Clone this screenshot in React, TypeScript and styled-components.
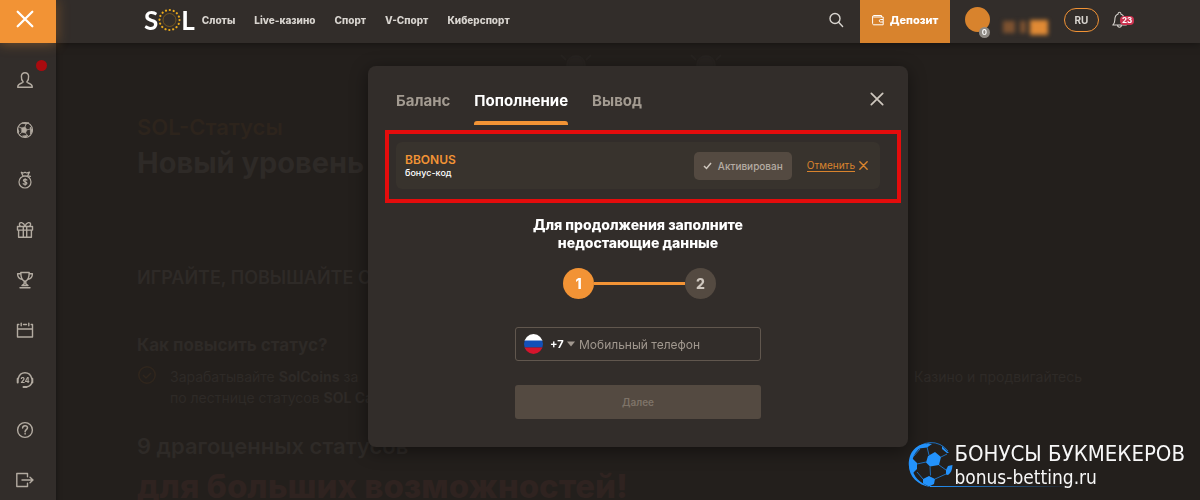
import React from 'react';
import styled, { createGlobalStyle } from 'styled-components';

const c = {
  page: '#231f1c',
  panel: '#322d2a',
  row: '#38332d',
  taupe: '#544a41',
  orange: '#f29335',
  muted: '#b3aba1',
  white: '#ffffff',
};

const GlobalStyle = createGlobalStyle`
  * { box-sizing: border-box; }
  body { margin: 0; background: ${c.page}; color: ${c.white}; overflow: hidden; }
  body, button, input, select { font-family: Inter, "Open Sans", sans-serif; }
  button { border: 0; padding: 0; background: none; color: inherit; cursor: pointer; }
  h1, h2, h3, p { margin: 0; }
`;

const Shell = styled.div`
  display: grid;
  grid-template-columns: 56px 1fr;
  height: 100vh;
  overflow: hidden;
`;

const Sidebar = styled.aside`
  position: relative;
  z-index: 3;
  display: flex;
  flex-direction: column;
  background: ${c.panel};
  box-shadow: 0 0 6px rgba(0, 0, 0, 0.4);
`;

const MenuToggle = styled.button`
  display: flex;
  flex: none;
  align-items: center;
  justify-content: center;
  height: 43px;
  padding: 0 6px 6px 0;
  background: ${c.orange};
  box-shadow: 0 0 12px rgba(242, 147, 53, 0.4);
`;

const SideNav = styled.nav`
  display: flex;
  flex-direction: column;
  padding-top: 12px;
`;

const SideLink = styled.a`
  position: relative;
  display: flex;
  flex: none;
  align-items: center;
  justify-content: center;
  height: 50px;
  padding-right: 6px;
  color: ${c.muted};
`;

const AlertDot = styled.span`
  position: absolute;
  top: 5px;
  right: 9px;
  width: 11px;
  height: 11px;
  border-radius: 50%;
  background: #a90b0f;
`;

const Column = styled.div`
  display: flex;
  flex-direction: column;
  min-width: 0;
`;

const Header = styled.header`
  position: relative;
  z-index: 2;
  display: flex;
  flex: none;
  align-items: center;
  height: 43px;
  padding: 0 66px 0 88px;
  background: ${c.panel};
  box-shadow: 0 0 8px rgba(0, 0, 0, 0.5);
`;

const Logo = styled.a`
  display: flex;
  align-items: center;
  margin-right: 7px;
  padding-bottom: 4px;
  color: ${c.white};
  font: 700 26px/36px Lato, sans-serif;
  text-decoration: none;
`;

const TopNav = styled.nav`
  display: flex;
  flex: 1;
  gap: 19px;
`;

const TopLink = styled.a`
  color: #d8d4cf;
  font-size: 10px;
  font-weight: 800;
  line-height: 16px;
  padding-bottom: 4px;
  text-decoration: none;
  white-space: nowrap;
`;

const SearchButton = styled.button`
  display: flex;
  margin: 0 16px 4px 0;
  color: #d8d4cf;
`;

const DepositButton = styled.button`
  display: flex;
  align-items: center;
  justify-content: center;
  gap: 6px;
  width: 90px;
  height: 43px;
  padding-bottom: 4px;
  background: #d8832d;
  color: ${c.white};
  font-size: 11px;
  font-weight: 800;
`;

const Avatar = styled.div`
  position: relative;
  width: 25px;
  height: 25px;
  margin: 0 10px 4px 15px;
  border-radius: 50%;
  background: #d8832d;
`;

const AvatarCount = styled.span`
  position: absolute;
  right: 0;
  bottom: -6px;
  width: 11px;
  height: 11px;
  border-radius: 50%;
  background: #8f8a84;
  font-size: 8px;
  font-weight: 600;
  line-height: 11px;
  text-align: center;
`;

const HiddenBalance = styled.div`
  display: flex;
  align-items: center;
  justify-content: space-between;
  width: 49px;
  height: 16px;
  margin: 11px 15px 0 0;
  padding: 0 1px 0 3px;
  filter: blur(2px);
`;

const BlurBar = styled.span<{ $w: number; $h: number; $color: string }>`
  width: ${(p) => p.$w}px;
  height: ${(p) => p.$h}px;
  background: ${(p) => p.$color};
`;

const LanguageButton = styled.button`
  width: 35px;
  height: 24px;
  margin: 0 13px 4px 0;
  border: 1px solid ${c.orange};
  border-radius: 12px;
  color: #d8d4cf;
  font-size: 10px;
  font-weight: 700;
`;

const BellButton = styled.button`
  position: relative;
  display: flex;
  width: 22px;
  margin-bottom: 4px;
  color: #d8d4cf;
`;

const BellCount = styled.span`
  position: absolute;
  top: 5px;
  right: 0;
  width: 14px;
  border-radius: 4px;
  background: #cc3350;
  color: ${c.white};
  font-size: 8px;
  font-weight: 700;
  line-height: 9px;
  text-align: center;
`;

const Page = styled.main`
  position: relative;
  padding: 70px 118px 0 81px;
  color: #2e2a27;
`;

const Awards = styled.div`
  position: absolute;
  top: 6px;
  left: 500px;
  display: flex;
  gap: 90px;
`;

const Eyebrow = styled.p`
  color: #2d241c;
  font-size: 22px;
  font-weight: 600;
  line-height: 28px;
`;

const PageTitle = styled.h1`
  font-size: 29px;
  font-weight: 700;
  line-height: 44px;
  white-space: nowrap;
`;

const Slogan = styled.h2`
  margin-top: 81px;
  font-size: 18px;
  font-weight: 600;
  line-height: 24px;
`;

const Question = styled.h3`
  margin-top: 43px;
  font-size: 17px;
  font-weight: 700;
  line-height: 24px;
`;

const Tip = styled.div`
  display: flex;
  gap: 11px;
  margin-top: 9px;
  font-size: 14px;
  line-height: 21px;
`;

const TipText = styled.div`
  flex: 1;
`;

const TipLine = styled.p`
  display: flex;
  justify-content: space-between;
`;

const StatusTitle = styled.h2`
  margin-top: 24px;
  font-size: 22px;
  font-weight: 600;
  line-height: 28px;
`;

const StatusLead = styled.p`
  margin-top: 6px;
  color: #2f2320;
  font-size: 33px;
  font-weight: 800;
  line-height: 40px;
  white-space: nowrap;
`;

const Overlay = styled.div`
  position: fixed;
  inset: 43px 0 0 56px;
  display: flex;
  align-items: flex-start;
  justify-content: center;
  padding: 23px 0 0 20px;
`;

const Dialog = styled.section`
  width: 540px;
  padding: 24px 28px 28px;
  border-radius: 8px;
  background: ${c.panel};
  box-shadow: 0 4px 18px rgba(0, 0, 0, 0.45);
`;

const DialogTop = styled.div`
  display: flex;
  align-items: flex-start;
  justify-content: space-between;
`;

const Tabs = styled.div`
  display: flex;
  gap: 24px;
`;

const Tab = styled.button<{ $active?: boolean }>`
  position: relative;
  padding-bottom: 13px;
  color: ${(p) => (p.$active ? c.white : '#a39b91')};
  font-size: 15px;
  font-weight: 700;
  line-height: 22px;
  &::after {
    content: '';
    position: absolute;
    inset: auto 0 0;
    height: 4px;
    border-radius: 3px 3px 0 0;
    background: ${(p) => (p.$active ? c.orange : 'transparent')};
  }
`;

const CloseButton = styled.button`
  display: flex;
  padding: 2px 0;
  margin-right: -4px;
  color: #cec7be;
`;

const Bonus = styled.div`
  position: relative;
  display: flex;
  align-items: center;
  height: 47px;
  margin-top: 17px;
  padding: 0 12px 0 9px;
  border-radius: 6px;
  background: ${c.row};
`;

const Highlight = styled.span`
  position: absolute;
  inset: -12px -21px -14px -11px;
  border: 4px solid #e40c0c;
  pointer-events: none;
`;

const BonusName = styled.div`
  flex: 1;
  font-size: 9px;
  font-weight: 500;
  line-height: 12px;
`;

const BonusCode = styled.strong`
  display: block;
  color: ${c.orange};
  font-size: 12px;
  font-weight: 600;
  line-height: 15px;
`;

const Activated = styled.button`
  display: flex;
  align-items: center;
  justify-content: center;
  gap: 6px;
  width: 98px;
  height: 28px;
  margin-right: 15px;
  border-radius: 5px;
  background: ${c.taupe};
  color: #b5aca3;
  font-size: 10px;
  font-weight: 500;
`;

const CancelButton = styled.button`
  display: flex;
  align-items: center;
  gap: 4px;
  color: #d8832d;
  font-size: 10px;
  span {
    border-bottom: 1px solid;
    line-height: 12px;
  }
`;

const FormTitle = styled.h2`
  margin-top: 27px;
  font-size: 14px;
  font-weight: 800;
  line-height: 18px;
  text-align: center;
`;

const Steps = styled.div`
  display: flex;
  align-items: center;
  justify-content: center;
  margin: 16px 0 28px;
  padding-left: 3px;
`;

const Step = styled.span<{ $active?: boolean }>`
  width: 31px;
  height: 31px;
  border-radius: 50%;
  background: ${(p) => (p.$active ? c.orange : c.taupe)};
  color: ${(p) => (p.$active ? c.white : '#cfc7be')};
  font-size: 14px;
  font-weight: 800;
  line-height: 31px;
  text-align: center;
`;

const StepLine = styled.span`
  width: 91px;
  height: 3px;
  background: ${c.orange};
`;

const Form = styled.form`
  display: flex;
  flex-direction: column;
  gap: 24px;
  width: 246px;
  margin: 0 auto;
`;

const PhoneField = styled.div`
  display: flex;
  align-items: center;
  height: 34px;
  padding: 0 8px;
  border: 1px solid #61574e;
  border-radius: 3px;
`;

const Prefix = styled.select`
  appearance: none;
  width: 15px;
  margin-left: 7px;
  padding: 0;
  border: 0;
  background: transparent;
  color: ${c.white};
  font-size: 11px;
  font-weight: 700;
`;

const PhoneInput = styled.input`
  flex: 1;
  min-width: 0;
  margin-left: 3px;
  padding: 0;
  border: 0;
  outline: 0;
  background: transparent;
  color: ${c.white};
  font-size: 12px;
  &::placeholder { color: #a1988f; opacity: 1; }
`;

const NextButton = styled.button`
  height: 34px;
  border-radius: 3px;
  background: ${c.taupe};
  color: #7e7368;
  font-size: 10px;
  font-weight: 600;
`;

const Watermark = styled.footer`
  position: fixed;
  right: 15px;
  bottom: 12px;
  z-index: 4;
  display: flex;
  align-items: center;
  gap: 1px;
  color: #f7f7f7;
  font-family: "DejaVu Sans Condensed", "DejaVu Sans", sans-serif;
  font-stretch: condensed;
  white-space: nowrap;
`;

const BrandName = styled.div`
  font-size: 22px;
  line-height: 24px;
`;

const BrandSite = styled.div`
  font-size: 19px;
  line-height: 22px;
`;

const Cross = ({ size, stroke = 1.5 }: { size: number; stroke?: number }) => (
  <svg width={size} height={size} viewBox="0 0 16 16" fill="none" stroke="currentColor" strokeWidth={stroke} strokeLinecap="round">
    <path d="M1.5 1.5l13 13M14.5 1.5l-13 13" />
  </svg>
);

const Icon = ({ children }: { children: React.ReactNode }) => (
  <svg width="18" height="18" viewBox="0 0 18 18" fill="none" stroke="currentColor" strokeWidth="1.4" strokeLinejoin="round" strokeLinecap="round">
    {children}
  </svg>
);

const sideItems = [
  {
    label: 'Профиль',
    alert: true,
    icon: <path d="M7.2 11C5.4 9 5.200 7 5.400 5 5.700 2.600 7 1.700 9 1.700s3.300.9 3.600 3.300c.2 2 0 4-1.800 6 0 1.200 5.500 1 5.500 5.200H1.700c0-4.200 5.500-4 5.500-5.200z" />,
  },
  {
    label: 'Спорт',
    icon: (
      <>
        <circle cx="9" cy="9" r="7.500" strokeWidth="1.100" />
        <path d="M5.500 7l3.500-1 2 2.800L9.500 12l-3.500-.8z" fill="currentColor" strokeWidth="0.600" />
        <path d="M9 6l1-3M11 8.800l3.500-.8M9.500 12l2 2.500M6 11.200L4 13M5.500 7L3 6" strokeWidth="0.800" />
        <path d="M6.500 2.200L10.500 3l2-1zM14.500 6.500l1.800 3.500-1.600 2.500zM1.800 8l1.200 3-1 .8zM7 15l4.500-.5-1.500 1.900z" fill="currentColor" strokeWidth="0.800" />
      </>
    ),
  },
  {
    label: 'Бонусы',
    icon: (
      <>
        <circle cx="9" cy="11" r="6" strokeWidth="1.200" />
        <path d="M7 5L5.300 1.200 7.500 2 9 1.200l1.500.8 3-.8L11.500 5zM11.500 4.800l3 .6M10.900 9c-1-.9-3.500-.8-3.500.6 0 1.500 3.500 1 3.500 2.600 0 1.400-2.600 1.500-3.700.5M9.100 7.600v6.600" strokeWidth="1.200" />
      </>
    ),
  },
  {
    label: 'Подарки',
    icon: <path d="M1.500 5.500h15v3.600h-15zM2.600 9.100v7.200h12.800V9.100M7.300 5.500v10.800M10.700 5.500v10.800M9 5.300C7.500.8 3.500.8 3.400 3.300c0 1.100.6 1.900 1.400 2.200M9 5.300c1.500-4.500 5.500-4.500 5.600-2 0 1.100-.6 1.900-1.400 2.200" />,
  },
  {
    label: 'Турниры',
    icon: <path d="M4.800 1.500h8.400c0 4.500-.6 8-4.200 8.900-3.600-.9-4.200-4.400-4.200-8.900zM4.800 2.800H1.600c0 3 1 5 4.200 5.400M13.200 2.800h3.200c0 3-1 5-4.200 5.400M8.200 10.400v2.300L6 14.500h6l-2.200-1.800v-2.300M4 16.700h10" />,
  },
  {
    label: 'Календарь',
    icon: <path d="M7.500 3.500h3M2.800 3.500H1.500v12.500h15v-12.500h-1.300M1.500 8h15M5.200 2.200v2.600M12.800 2.200v2.600" />,
  },
  {
    label: 'Поддержка',
    icon: (
      <>
        <path d="M2.200 7.500C3.200 3.800 5.700 1.800 9 1.800s5.800 2 6.800 5.700M15.800 11.500c-.7 2.700-2.500 4-5 4.300" />
        <path d="M1.700 7.800v3.600M16.300 7.800v3.600M7.500 15.900h3" strokeWidth="2" />
        <text x="9" y="11.500" fill="currentColor" stroke="none" fontSize="7" fontWeight="800" textAnchor="middle">24</text>
      </>
    ),
  },
  {
    label: 'Помощь',
    icon: (
      <>
        <circle cx="9" cy="9" r="7.400" />
        <path d="M6.600 7c.1-3.200 4.900-3 4.900-.2 0 1.900-2.400 1.800-2.400 3.900M9.100 12.600v.4" strokeWidth="1.500" />
      </>
    ),
  },
  {
    label: 'Выход',
    icon: <path d="M11.500 5.700V2.500H.8v13h10.700v-3.200M6 9h11M14 6.200L17 9l-3 2.800" />,
  },
];

const topLinks = ['Слоты', 'Live-казино', 'Спорт', 'V-Спорт', 'Киберспорт'];

const SunMark = () => (
  <svg width="23" height="24" viewBox="0 0 23 24" fill="none">
    <circle cx="11.500" cy="12" r="10" stroke="#e9a91c" strokeWidth="2.200" strokeDasharray="0.1 3.827" strokeLinecap="round" />
    <circle cx="11.500" cy="12" r="6.500" stroke="#8e651b" strokeWidth="0.700" />
  </svg>
);

const FaintAward = () => (
  <svg width="40" height="30" viewBox="0 0 40 30" fill="none" stroke="#272320" strokeWidth="2">
    <circle cx="20" cy="16" r="9" fill="#272320" />
    <path d="M5 6l5 5M35 6l-5 5M3 18h5M32 18h5" />
  </svg>
);

const BallMark = () => (
  <svg width="45" height="46" viewBox="0 0 45 46" fill="none" overflow="visible">
    <defs>
      <linearGradient id="trail" gradientUnits="userSpaceOnUse" x1="22" y1="0" x2="165" y2="0">
        <stop offset="0" stopColor="#2392fb" />
        <stop offset="1" stopColor="#2392fb" stopOpacity="0" />
      </linearGradient>
    </defs>
    <path d="M22 44.500H165" stroke="url(#trail)" />
    <path d="M40 9A21 21 0 0 0 5 11" stroke="#1e6fbd" />
    <path d="M22 1.500C5 1 .5 14 .8 23 1 35 10 43 22 45 12 41 5 35 4 25 3 14 9 5 22 1.500z" fill="#2392fb" />
    <path d="M20 14l7-4 6 5-2 8-9 1.500-4-4zM1 20l3-4 5 5v6l-4 4C2 29 1 25 1 20zM15 37l6-3 6 3-1 5-5 2.500-6-3zM38 28l2-4 4.500-1c-.3 5-1.500 8-4.500 10l-2-.5zM12 5l8-3.500 4 .500-5 3.500-8 1zM34 4l7 7-2 0-5-4z" fill="#2392fb" />
    <path d="M19 5l2 8M12 7L5 15M18 20l-9 2M22 24.500l.500 9M9 30l6 7M31 23l7 5M33 15l6-3M27 37l11-5" stroke="#1e6fbd" />
  </svg>
);

export default function App() {
  return (
    <>
      <GlobalStyle />
      <Shell>
        <Sidebar>
          <MenuToggle aria-label="Закрыть меню"><Cross size={18} stroke={2} /></MenuToggle>
          <SideNav>
            {sideItems.map((item) => (
              <SideLink href="#" key={item.label} aria-label={item.label}>
                <Icon>{item.icon}</Icon>
                {item.alert && <AlertDot />}
              </SideLink>
            ))}
          </SideNav>
        </Sidebar>
        <Column>
          <Header>
            <Logo href="#">S<SunMark />L</Logo>
            <TopNav>
              {topLinks.map((label) => <TopLink href="#" key={label}>{label}</TopLink>)}
            </TopNav>
            <SearchButton aria-label="Поиск">
              <svg width="16" height="16" viewBox="0 0 16 16" fill="none" stroke="currentColor" strokeWidth="1.400" strokeLinecap="round">
                <circle cx="7" cy="6.500" r="5" /><path d="M10.600 10.200l4 4.300" />
              </svg>
            </SearchButton>
            <DepositButton>
              <svg width="12" height="12" viewBox="0 0 12 12" fill="none" stroke="currentColor" strokeLinejoin="round">
                <path d="M9.500 3V1.500H1.500C.8 1.500.8 3 1.500 3h9.700v7.800H2c-1 0-1.400-.5-1.400-1.300V2.200M11 5.500H8.300c-1.300 0-1.300 2.500 0 2.500H11" />
              </svg>
              Депозит
            </DepositButton>
            <Avatar><AvatarCount>0</AvatarCount></Avatar>
            <HiddenBalance>
              <BlurBar $w={12} $h={12} $color="#7d5230" />
              <BlurBar $w={6} $h={12} $color="#7d5230" />
              <BlurBar $w={18} $h={15} $color="#e08a35" />
            </HiddenBalance>
            <LanguageButton>RU</LanguageButton>
            <BellButton aria-label="Уведомления">
              <svg width="16" height="18" viewBox="0 0 16 18" fill="none" stroke="currentColor" strokeWidth="1.100" strokeLinejoin="round">
                <path d="M6 3.200C6 .6 9 .6 9 3.200c3 .8 3.200 3 3.200 6 0 2.300.8 3.500 2 4.800H.8c1.200-1.300 2-2.500 2-4.800 0-3 .2-5.200 3.200-6zM5.500 14c.2 3 3.800 3 4 0" />
              </svg>
              <BellCount>23</BellCount>
            </BellButton>
          </Header>
          <Page>
            <Awards aria-hidden="true"><FaintAward /><FaintAward /></Awards>
            <Eyebrow>SOL-Статусы</Eyebrow>
            <PageTitle>Новый уровень</PageTitle>
            <Slogan>ИГРАЙТЕ, ПОВЫШАЙТЕ СТАТУС</Slogan>
            <Question>Как повысить статус?</Question>
            <Tip>
              <svg width="22" height="22" viewBox="0 0 22 22" fill="none" stroke="#30261d" strokeWidth="1.500">
                <circle cx="10" cy="9" r="8.200" /><path d="M6 9l3 3 5-5" />
              </svg>
              <TipText>
                <TipLine>
                  <span>Зарабатывайте <b>SolCoins</b> за</span>
                  <span>Казино и продвигайтесь</span>
                </TipLine>
                <p>по лестнице статусов <b>SOL Casino</b></p>
              </TipText>
            </Tip>
            <StatusTitle>9 драгоценных статусов</StatusTitle>
            <StatusLead>для больших возможностей!</StatusLead>
          </Page>
        </Column>
      </Shell>
      <Overlay>
        <Dialog role="dialog" aria-label="Пополнение">
          <DialogTop>
            <Tabs role="tablist">
              <Tab role="tab">Баланс</Tab>
              <Tab role="tab" aria-selected $active>Пополнение</Tab>
              <Tab role="tab">Вывод</Tab>
            </Tabs>
            <CloseButton aria-label="Закрыть"><Cross size={14} stroke={2} /></CloseButton>
          </DialogTop>
          <Bonus>
            <BonusName><BonusCode>BBONUS</BonusCode>бонус-код</BonusName>
            <Activated>
              <svg width="9" height="8" viewBox="0 0 9 8" fill="none" stroke="#d0c8bf" strokeWidth="1.500"><path d="M1 4l2.500 2.500L8 1" /></svg>
              Активирован
            </Activated>
            <CancelButton><span>Отменить</span><Cross size={9} stroke={2.5} /></CancelButton>
            <Highlight />
          </Bonus>
          <FormTitle>Для продолжения заполните<br />недостающие данные</FormTitle>
          <Steps><Step $active>1</Step><StepLine /><Step>2</Step></Steps>
          <Form onSubmit={(e) => e.preventDefault()}>
            <PhoneField>
              <svg width="19" height="20" viewBox="0 0 19 20">
                <clipPath id="flag"><ellipse cx="9.500" cy="10" rx="9.500" ry="10" /></clipPath>
                <g clipPath="url(#flag)">
                  <path fill="#fff" d="M0 0h19v7H0z" /><path fill="#1450b8" d="M0 6.500h19v7H0z" /><path fill="#d5142c" d="M0 13.500h19V20H0z" />
                </g>
              </svg>
              <Prefix aria-label="Код страны" defaultValue="+7"><option>+7</option></Prefix>
              <svg width="11" height="6" viewBox="0 0 11 6"><path d="M2 .5h8L6 5.500z" fill="#a1988f" /></svg>
              <PhoneInput type="tel" aria-label="Мобильный телефон" placeholder="Мобильный телефон" />
            </PhoneField>
            <NextButton>Далее</NextButton>
          </Form>
        </Dialog>
      </Overlay>
      <Watermark>
        <BallMark />
        <div>
          <BrandName>БОНУСЫ БУКМЕКЕРОВ</BrandName>
          <BrandSite>bonus-betting.ru</BrandSite>
        </div>
      </Watermark>
    </>
  );
}
